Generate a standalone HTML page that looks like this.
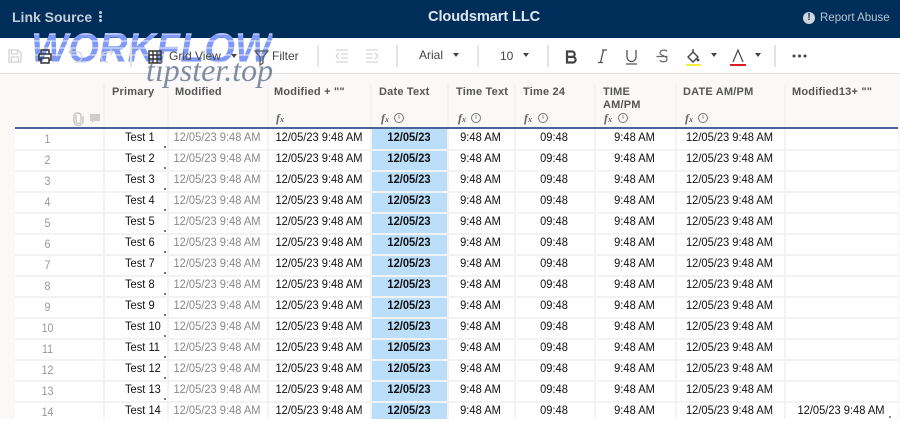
<!DOCTYPE html>
<html><head><meta charset="utf-8"><style>
html,body{margin:0;padding:0;width:900px;height:419px;overflow:hidden;background:#fff;font-family:"Liberation Sans",sans-serif}
.a{position:absolute;white-space:nowrap}
#top{left:0;top:0;width:900px;height:38px;background:#002e5b}
#tb{left:0;top:38px;width:900px;height:35px;background:#fff;border-bottom:1px solid #dedede}
#hd{left:0;top:74px;width:900px;height:53px;background:#faf9f8}
.sep{position:absolute;top:45px;width:2px;height:22px;background:#e4e4e4}
.h{position:absolute;font-size:11px;line-height:13px;font-weight:bold;color:#555;top:86px;white-space:nowrap;letter-spacing:.2px}
.v{position:absolute;top:84px;height:335px;width:2px;background:#f3f3f3}
.r{position:absolute;left:15px;width:883px;height:2px;background:#f3f3f3}
.w{position:absolute;left:0;width:900px;height:21px}
.w div{position:absolute;top:0;font-size:12px;line-height:14px;color:#111;white-space:nowrap;text-align:center;transform:scaleX(.925)}
.w .n{left:15px;width:65px;top:3px;color:#999;font-size:11.5px}
.w .p{left:125px;text-align:left;transform-origin:left center}
.w .m{left:167px;width:100px;color:#888}
.w .o{left:267px;width:104px}
.w .b{left:371px;width:76px;font-weight:bold}
.w .t1{left:447px;width:67px}
.w .t2{left:514px;width:80px}
.w .t3{left:594px;width:81px}
.w .d1{left:675px;width:109px}
.w .l{left:784px;width:114px}
.t{position:absolute;font-size:12px;color:#444;white-space:nowrap}
.fx{position:absolute;top:111px;font:italic bold 12px/14px "Liberation Serif",serif;color:#666}
.fx small{font-size:8px}
.i{position:absolute;top:113px;width:8px;height:8px;border:1px solid #777;border-radius:50%;font-size:7px;line-height:8px;text-align:center;color:#666}
.d{position:absolute;width:0;height:0;border-left:3px solid transparent;border-right:3px solid transparent;border-top:4px solid #444}
svg{position:absolute;overflow:visible}
</style></head><body>
<div class="a" id="top"></div>
<div class="a" style="left:12px;top:9px;font-size:14px;font-weight:bold;color:#c4ccd6;line-height:16px">Link Source</div>
<div class="a" style="left:99px;top:11px;width:3px;height:3px;background:#c4ccd6;border-radius:50%;box-shadow:0 4px 0 #c4ccd6,0 8px 0 #c4ccd6"></div>
<div class="a" style="left:428px;top:8px;font-size:14.6px;font-weight:bold;color:#dfe6ee;line-height:19px;letter-spacing:-.1px">Cloudsmart LLC</div>
<div class="a" style="left:803px;top:12px;width:12px;height:12px;border-radius:50%;background:#d0d6dd;color:#002e5b;font-size:10px;font-weight:bold;line-height:12px;text-align:center">!</div>
<div class="a" style="left:820px;top:11px;font-size:11.5px;color:#b9c3cf;line-height:14px">Report Abuse</div>

<div class="a" id="tb"></div>
<div class="a" style="left:31px;top:28px;font-size:42px;line-height:40px;font-weight:bold;font-style:italic;color:transparent;background:repeating-linear-gradient(to bottom,#7f99f5 0,#7f99f5 5px,#b7c6fa 5px,#b7c6fa 7px);-webkit-background-clip:text;background-clip:text;letter-spacing:0;transform:scaleX(.94);transform-origin:left top">WORKFLOW</div>
<svg style="left:0;top:38px" width="900" height="35" fill="none">
<path d="M9 12h9l3 3v9H9z M11.500 12v4h6v-4 M11.500 24v-5h7v5" stroke="#d2d2d2" stroke-width="1.300"/>
<path d="M41 16v-4h8v4 M39 16h12v6h-2 M41 22h-2v-6 M41 20h8v5h-8z" stroke="#333" stroke-width="1.500"/>
<path d="M70 14h8a5 5 0 1 1-3 10 M72 11l-3 3 3 3" stroke="#d4d4d4" stroke-width="1.200"/>
<path d="M112 14h-7a5 5 0 1 0 3 10 M110 11l3 3-3 3" stroke="#d4d4d4" stroke-width="1.200"/>
<path d="M149 13h12v12h-12z M149 17h12 M149 21h12 M153 13v12 M157 13v12" stroke="#333" stroke-width="1.400"/>
<path d="M255 13h13l-5 6v6l-3 2v-8z" stroke="#555" stroke-width="1.200"/>
<path d="M336 12h12 M341 16h7 M341 20h7 M336 24h12 M339 15l-3 3 3 3" stroke="#ccc" stroke-width="1"/>
<path d="M366 12h12 M366 16h7 M366 20h7 M366 24h12 M375 15l3 3-3 3" stroke="#ccc" stroke-width="1"/>
<path d="M567 13.500h5a2.700 2.700 0 0 1 0 5.400h-5z M567 18.900h5.800a2.800 2.800 0 0 1 0 5.600h-5.800z" stroke="#444" stroke-width="2.200"/>
<path d="M598 24.500h5 M607 12h-5 M603.500 12l-3 12.500" stroke="#555" stroke-width="1.300"/>
<path d="M627 12v7a4.500 4.500 0 0 0 9 0v-7 M626 26h11" stroke="#555" stroke-width="1.300"/>
<path d="M667 13.500c-1-2-7-2-7 1.500 0 3 7 2.500 7 6 0 3.500-6 3.500-7 1 M656.500 18.500h11" stroke="#666" stroke-width="1.200"/>
<path d="M693 14l-5 5 5 5 5-5z M693 11v4" stroke="#444" stroke-width="1.400"/><circle cx="698" cy="22" r="1.400" fill="#444"/>
<rect x="686" y="26" width="15" height="2" fill="#f5ef3c"/>
<path d="M733 24l5-12 5 12" stroke="#444" stroke-width="1.200"/><rect x="730" y="26" width="16" height="2" fill="#dd1c24"/>
<circle cx="794" cy="18" r="1.500" fill="#444"/><circle cx="799.500" cy="18" r="1.500" fill="#444"/><circle cx="805" cy="18" r="1.500" fill="#444"/>
</svg>
<div class="sep" style="left:130px"></div><div class="sep" style="left:317px"></div><div class="sep" style="left:396px"></div><div class="sep" style="left:477px"></div><div class="sep" style="left:547px"></div><div class="sep" style="left:774px"></div>
<div class="t" style="left:169px;top:49px">Grid View</div><div class="d" style="left:231px;top:54px"></div>
<div class="t" style="left:272px;top:49px">Filter</div>
<div class="t" style="left:419px;top:48px">Arial</div><div class="d" style="left:453px;top:53px"></div>
<div class="t" style="left:500px;top:49px">10</div><div class="d" style="left:523px;top:53px"></div>
<div class="d" style="left:711px;top:53px"></div><div class="d" style="left:755px;top:53px"></div>

<div class="a" id="hd"></div>
<div class="h" style="left:112px">Primary</div>
<div class="h" style="left:175px">Modified</div>
<div class="h" style="left:274px">Modified + ""</div>
<div class="h" style="left:379px">Date Text</div>
<div class="h" style="left:456px">Time Text</div>
<div class="h" style="left:523px">Time 24</div>
<div class="h" style="left:603px">TIME<br>AM/PM</div>
<div class="h" style="left:683px">DATE AM/PM</div>
<div class="h" style="left:792px">Modified13+ ""</div>
<div class="fx" style="left:276px">f<small>x</small></div>
<div class="fx" style="left:381px">f<small>x</small></div><div class="i" style="left:394px">i</div>
<div class="fx" style="left:458px">f<small>x</small></div><div class="i" style="left:471px">i</div>
<div class="fx" style="left:524px">f<small>x</small></div><div class="i" style="left:538px">i</div>
<div class="fx" style="left:604px">f<small>x</small></div><div class="i" style="left:618px">i</div>
<div class="fx" style="left:685px">f<small>x</small></div><div class="i" style="left:698px">i</div>
<svg style="left:0;top:0" width="110" height="127"><path d="M76 115v6a2.500 2.500 0 0 0 5 0v-6a4 4 0 0 0-7 0v6a4.500 4.500 0 0 0 9 0v-5" stroke="#c4c4c4" stroke-width="1.300" fill="none"/><path d="M90 114h10v7h-6l-2 2v-2h-2z" fill="#cdcdcd"/></svg>

<div class="a" style="left:371px;top:128px;width:76px;height:291px;background:#bbdefb"></div>
<div class="a" style="left:0;top:127px;width:15px;height:292px;background:#faf9f8"></div>
<div class="a" style="left:898px;top:127px;width:2px;height:292px;background:#faf9f8"></div>

<div class="r" style="top:149px"></div><div class="r" style="top:170px"></div><div class="r" style="top:191px"></div><div class="r" style="top:212px"></div><div class="r" style="top:233px"></div><div class="r" style="top:254px"></div><div class="r" style="top:275px"></div><div class="r" style="top:296px"></div><div class="r" style="top:317px"></div><div class="r" style="top:338px"></div><div class="r" style="top:359px"></div><div class="r" style="top:380px"></div><div class="r" style="top:401px"></div>
<div class="v" style="left:103px"></div><div class="v" style="left:167px"></div><div class="v" style="left:267px"></div><div class="v" style="left:370px"></div><div class="v" style="left:447px"></div><div class="v" style="left:514px"></div><div class="v" style="left:594px"></div><div class="v" style="left:675px"></div><div class="v" style="left:784px"></div>
<div class="a" style="left:15px;top:127px;width:883px;height:2px;background:#46639a"></div>
<div class="a" style="left:164px;top:146px;width:2px;height:273px;background:repeating-linear-gradient(to bottom,#777 0,#777 2px,transparent 2px,transparent 21px)"></div>
<div class="a" style="left:889px;top:416px;width:2px;height:2px;background:#888"></div>

<div class="w" style="top:130px"><div class="n">1</div><div class="p">Test 1</div><div class="m">12/05/23 9:48 AM</div><div class="o">12/05/23 9:48 AM</div><div class="b">12/05/23</div><div class="t1">9:48 AM</div><div class="t2">09:48</div><div class="t3">9:48 AM</div><div class="d1">12/05/23 9:48 AM</div></div>
<div class="w" style="top:151px"><div class="n">2</div><div class="p">Test 2</div><div class="m">12/05/23 9:48 AM</div><div class="o">12/05/23 9:48 AM</div><div class="b">12/05/23</div><div class="t1">9:48 AM</div><div class="t2">09:48</div><div class="t3">9:48 AM</div><div class="d1">12/05/23 9:48 AM</div></div>
<div class="w" style="top:172px"><div class="n">3</div><div class="p">Test 3</div><div class="m">12/05/23 9:48 AM</div><div class="o">12/05/23 9:48 AM</div><div class="b">12/05/23</div><div class="t1">9:48 AM</div><div class="t2">09:48</div><div class="t3">9:48 AM</div><div class="d1">12/05/23 9:48 AM</div></div>
<div class="w" style="top:193px"><div class="n">4</div><div class="p">Test 4</div><div class="m">12/05/23 9:48 AM</div><div class="o">12/05/23 9:48 AM</div><div class="b">12/05/23</div><div class="t1">9:48 AM</div><div class="t2">09:48</div><div class="t3">9:48 AM</div><div class="d1">12/05/23 9:48 AM</div></div>
<div class="w" style="top:214px"><div class="n">5</div><div class="p">Test 5</div><div class="m">12/05/23 9:48 AM</div><div class="o">12/05/23 9:48 AM</div><div class="b">12/05/23</div><div class="t1">9:48 AM</div><div class="t2">09:48</div><div class="t3">9:48 AM</div><div class="d1">12/05/23 9:48 AM</div></div>
<div class="w" style="top:235px"><div class="n">6</div><div class="p">Test 6</div><div class="m">12/05/23 9:48 AM</div><div class="o">12/05/23 9:48 AM</div><div class="b">12/05/23</div><div class="t1">9:48 AM</div><div class="t2">09:48</div><div class="t3">9:48 AM</div><div class="d1">12/05/23 9:48 AM</div></div>
<div class="w" style="top:256px"><div class="n">7</div><div class="p">Test 7</div><div class="m">12/05/23 9:48 AM</div><div class="o">12/05/23 9:48 AM</div><div class="b">12/05/23</div><div class="t1">9:48 AM</div><div class="t2">09:48</div><div class="t3">9:48 AM</div><div class="d1">12/05/23 9:48 AM</div></div>
<div class="w" style="top:277px"><div class="n">8</div><div class="p">Test 8</div><div class="m">12/05/23 9:48 AM</div><div class="o">12/05/23 9:48 AM</div><div class="b">12/05/23</div><div class="t1">9:48 AM</div><div class="t2">09:48</div><div class="t3">9:48 AM</div><div class="d1">12/05/23 9:48 AM</div></div>
<div class="w" style="top:298px"><div class="n">9</div><div class="p">Test 9</div><div class="m">12/05/23 9:48 AM</div><div class="o">12/05/23 9:48 AM</div><div class="b">12/05/23</div><div class="t1">9:48 AM</div><div class="t2">09:48</div><div class="t3">9:48 AM</div><div class="d1">12/05/23 9:48 AM</div></div>
<div class="w" style="top:319px"><div class="n">10</div><div class="p">Test 10</div><div class="m">12/05/23 9:48 AM</div><div class="o">12/05/23 9:48 AM</div><div class="b">12/05/23</div><div class="t1">9:48 AM</div><div class="t2">09:48</div><div class="t3">9:48 AM</div><div class="d1">12/05/23 9:48 AM</div></div>
<div class="w" style="top:340px"><div class="n">11</div><div class="p">Test 11</div><div class="m">12/05/23 9:48 AM</div><div class="o">12/05/23 9:48 AM</div><div class="b">12/05/23</div><div class="t1">9:48 AM</div><div class="t2">09:48</div><div class="t3">9:48 AM</div><div class="d1">12/05/23 9:48 AM</div></div>
<div class="w" style="top:361px"><div class="n">12</div><div class="p">Test 12</div><div class="m">12/05/23 9:48 AM</div><div class="o">12/05/23 9:48 AM</div><div class="b">12/05/23</div><div class="t1">9:48 AM</div><div class="t2">09:48</div><div class="t3">9:48 AM</div><div class="d1">12/05/23 9:48 AM</div></div>
<div class="w" style="top:382px"><div class="n">13</div><div class="p">Test 13</div><div class="m">12/05/23 9:48 AM</div><div class="o">12/05/23 9:48 AM</div><div class="b">12/05/23</div><div class="t1">9:48 AM</div><div class="t2">09:48</div><div class="t3">9:48 AM</div><div class="d1">12/05/23 9:48 AM</div></div>
<div class="w" style="top:403px"><div class="n">14</div><div class="p">Test 14</div><div class="m">12/05/23 9:48 AM</div><div class="o">12/05/23 9:48 AM</div><div class="b">12/05/23</div><div class="t1">9:48 AM</div><div class="t2">09:48</div><div class="t3">9:48 AM</div><div class="d1">12/05/23 9:48 AM</div><div class="l">12/05/23 9:48 AM</div></div>

<div class="a" style="left:146px;top:52px;font:italic 32px/36px 'Liberation Serif',serif;color:#6d7a94;opacity:.85">tipster.top</div>
</body></html>
